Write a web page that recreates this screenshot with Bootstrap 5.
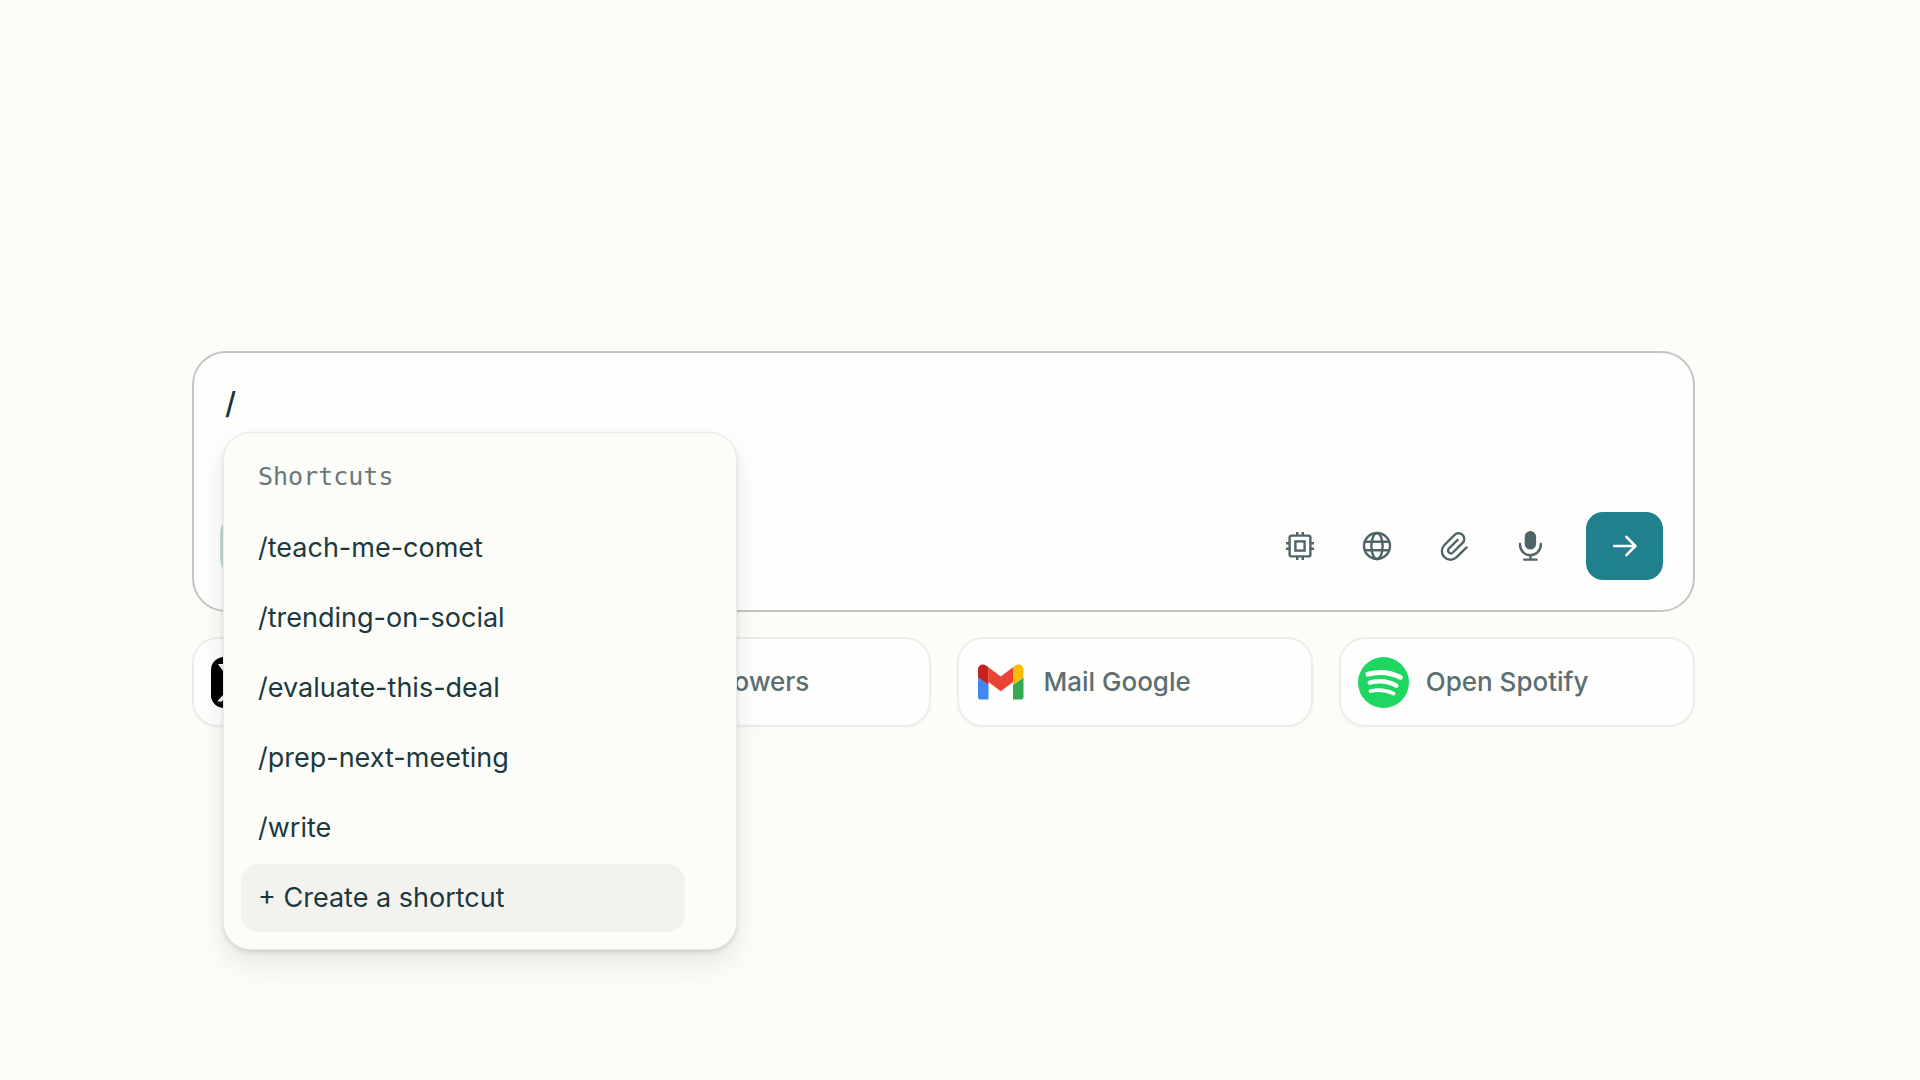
<!DOCTYPE html>
<html lang="en">
<head>
<meta charset="utf-8">
<meta name="viewport" content="width=device-width, initial-scale=1">
<title>Shortcuts</title>
<link href="https://cdn.jsdelivr.net/npm/bootstrap@5.3.0/dist/css/bootstrap.min.css" rel="stylesheet">
<style>
  :root { --ink: #1b393e; --muted: #5c6e70; --teal: #21808d; --paper: #fcfdf8; --edge: #ececea; }
  body { background: var(--paper); color: var(--ink); font-family: Inter, "Open Sans", sans-serif; font-size: 27px; line-height: 36px; }
  .page { padding: 351px 225px 120px 192px; }
  .composer { background: #fefefd; border: 2px solid #c4c6c4; border-radius: 34px; height: 261px; padding: 26px 30px 30px 31px; }
  .prompt-input { border: 0; outline: 0; background: transparent; color: #13343b; font-size: 30px; font-weight: 500; line-height: 48px; height: 48px; padding: 0; resize: none; overflow: hidden; }
  .mode-switch { width: 150px; height: 60px; margin-left: -5px; background: #c9dbdb; border: 0; border-radius: 18px; }
  .tool { width: 77px; height: 68px; padding: 0; border: 0; color: #4e6466; }
  .tool svg { width: 30px; height: 30px; display: block; }
  .send { width: 77px; height: 68px; margin-left: 17px; padding: 0; border: 0; border-radius: 17px; background: var(--teal); color: #fff; }
  .send:hover { background: #1b6f7b; color: #fff; }
  .quick { margin-top: 25px; gap: 26px; }
  .quick-link { flex: 1 1 0; min-width: 0; height: 90px; gap: 17px; padding: 0 17px; background: #fefefd; border: 2px solid var(--edge); border-radius: 26px; box-shadow: 0 2px 4px rgba(0,0,0,.02); color: var(--muted); font-size: 26px; font-weight: 500; text-decoration: none; white-space: nowrap; }
  .quick-link svg { width: 51px; height: 51px; flex: none; }
  .shortcut-menu { position: absolute; left: 31px; top: 81px; width: 514px; padding: 15px 51px 17px 17px; background: var(--paper); border: 1px solid #ebece8; border-radius: 28px; box-shadow: 0 14px 28px rgba(0,0,0,.09), 0 2px 4px rgba(0,0,0,.12); z-index: 5; }
  .menu-title { font-family: "DejaVu Sans Mono", monospace; font-size: 25px; font-weight: 400; line-height: 36px; color: #6b7778; padding: 11px 17px; margin: 0 0 8px; }
  .menu-list { gap: 2px; }
  .menu-entry { display: block; width: 100%; height: 68px; padding: 0 17px; border: 0; border-radius: 18px; background: transparent; color: var(--ink); text-align: left; }
  .menu-entry.current, .menu-entry:hover { background: #f2f3ee; }
</style>
<script src="https://cdn.jsdelivr.net/npm/bootstrap@5.3.0/dist/js/bootstrap.bundle.min.js"></script>
</head>
<body>
<main class="page min-vh-100">
  <div class="position-relative">
    <form class="composer d-flex flex-column justify-content-between">
      <textarea class="prompt-input w-100" rows="1" aria-label="Ask anything">/</textarea>
      <div class="d-flex align-items-center">
        <button type="button" class="mode-switch" aria-label="Search mode"></button>
        <div class="d-flex align-items-center ms-auto">
          <button type="button" class="btn tool d-flex align-items-center justify-content-center" aria-label="Choose a model">
            <svg viewBox="0 0 30 30" fill="none" stroke="currentColor" stroke-width="2.4"><rect x="4.6" y="4.6" width="20.8" height="20.8" rx="2"/><rect x="10.4" y="10.4" width="9.2" height="9.2"/><path d="M12.2 1v4M17.8 1v4M12.2 25v4M17.8 25v4M1 12.2h4M1 17.8h4M25 12.2h4M25 17.8h4"/></svg>
          </button>
          <button type="button" class="btn tool d-flex align-items-center justify-content-center" aria-label="Sources">
            <svg viewBox="0 0 30 30" fill="none" stroke="currentColor" stroke-width="2.4"><circle cx="15" cy="15" r="13"/><ellipse cx="15" cy="15" rx="5.6" ry="13"/><path d="M2.6 10.7h24.8M2.6 19.3h24.8"/></svg>
          </button>
          <button type="button" class="btn tool d-flex align-items-center justify-content-center" aria-label="Attach a file">
            <svg viewBox="0 0 30 30" fill="none" stroke="currentColor" stroke-width="2.4" stroke-linecap="round" stroke-linejoin="round"><path d="M27.6 16.4 17.6 26.2a8.6 8.6 0 0 1-12.2-12.2L15.6 3.9a5.6 5.6 0 0 1 8 8L13.9 21.5a2.8 2.8 0 0 1-4-4L18.6 8.9"/></svg>
          </button>
          <button type="button" class="btn tool d-flex align-items-center justify-content-center" aria-label="Dictate">
            <svg viewBox="0 0 30 30" fill="none" stroke="currentColor" stroke-width="2.4" stroke-linecap="round"><rect x="8.7" y="0" width="11.4" height="18.6" rx="5.7" fill="currentColor" stroke="none"/><path d="M4 13v.8a10.4 10.4 0 0 0 20.8 0V13M14.4 24.4v4M8.2 28.6h12.4"/></svg>
          </button>
          <button type="submit" class="btn send d-flex align-items-center justify-content-center" aria-label="Send">
            <svg width="26" height="24" viewBox="0 0 26 24" fill="none" stroke="currentColor" stroke-width="2.6" stroke-linecap="round" stroke-linejoin="round"><path d="M2.2 12h21M14.4 2.8l9 9.2-9 9.2"/></svg>
          </button>
        </div>
      </div>
    </form>

    <div class="shortcut-menu">
      <h2 class="menu-title">Shortcuts</h2>
      <div class="menu-list d-flex flex-column">
        <button type="button" class="menu-entry">/teach-me-comet</button>
        <button type="button" class="menu-entry">/trending-on-social</button>
        <button type="button" class="menu-entry">/evaluate-this-deal</button>
        <button type="button" class="menu-entry">/prep-next-meeting</button>
        <button type="button" class="menu-entry">/write</button>
        <button type="button" class="menu-entry current">+ Create a shortcut</button>
      </div>
    </div>
  </div>

  <nav class="quick d-flex" aria-label="Quick links">
    <a href="#" class="quick-link d-flex align-items-center" aria-label="X">
      <svg viewBox="0 0 51 51"><rect width="51" height="51" rx="13" fill="#000"/><path d="M7 7h10.5l9.5 13L38.5 7h4.5L29 23.3 45 44.5H34.2L23.5 30 10.8 44.5H6.3L21.6 27zM13 10l22.6 31.5h4L17 10z" fill="#fff"/></svg>
    </a>
    <a href="#" class="quick-link d-flex align-items-center">
      <svg viewBox="0 0 51 51"><g fill="#d86a8f"><circle cx="25" cy="13" r="9"/><circle cx="37" cy="22" r="9"/><circle cx="33" cy="36" r="9"/><circle cx="17" cy="36" r="9"/><circle cx="13" cy="22" r="9"/></g><circle cx="25" cy="26" r="7" fill="#fbbc04"/></svg>
      <span>Get Flowers</span>
    </a>
    <a href="#" class="quick-link d-flex align-items-center">
      <svg viewBox="0 0 51 51"><path d="M2 20.5 12.5 28v14.6H5.2A3.2 3.2 0 0 1 2 39.4z" fill="#4285f4"/><path d="M37 28l10.5-7.5v18.9a3.2 3.2 0 0 1-3.2 3.2H37z" fill="#34a853"/><path d="M12.5 25V10.3L24.7 19.5 37 10.3V25l-12.3 9.2z" fill="#ea4335"/><path d="M37 10.3l2.6-1.9c3.2-2.4 7.9-.1 7.9 4v8.1L37 28z" fill="#fbbc04"/><path d="M2 20.5v-8.1c0-4.1 4.700-6.400 7.900-4l2.600 1.900V28z" fill="#c5221f"/></svg>
      <span>Mail Google</span>
    </a>
    <a href="#" class="quick-link d-flex align-items-center">
      <svg viewBox="0 0 51 51"><circle cx="25.5" cy="25.5" r="25.5" fill="#1ed760"/><g fill="none" stroke="#fff" stroke-linecap="round"><path d="M10 17.2c11.500-3 23-1.700 32.300 3.200" stroke-width="5"/><path d="M11.700 25.600c9.600-2.400 18.800-1.300 26.600 3" stroke-width="4.400"/><path d="M12.500 34c8.200-1.800 16.100-.9 23 2.600" stroke-width="3.800"/></g></svg>
      <span>Open Spotify</span>
    </a>
  </nav>
</main>
</body>
</html>
